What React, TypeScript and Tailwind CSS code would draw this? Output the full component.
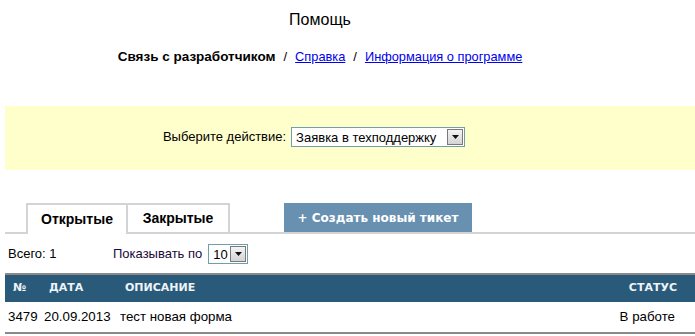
import React from 'react';

function SelectBox({ value, width }: { value: string; width: string }) {
  return (
    <div className={`flex items-center h-[20px] ${width} border border-[#6f9fac] bg-white pl-[4px] pr-[1px]`}>
      <span className="flex-1 text-[13px] leading-none text-black">{value}</span>
      <div className="flex items-center justify-center w-[16px] h-[16px] border border-[#7a7a7a] bg-gradient-to-b from-[#f4f4f4] to-[#d4d4d4]">
        <svg width="7" height="4" viewBox="0 0 7 4">
          <path d="M0 0h7L3.5 4z" fill="#111" />
        </svg>
      </div>
    </div>
  );
}

export default function App() {
  return (
    <div className="w-[695px] h-[336px] bg-white overflow-hidden font-['Liberation_Sans',Arial,sans-serif] text-[13px] text-black">
      <div className="w-[640px] text-center pt-[11px]">
        <h1 className="text-[16px] leading-[18px]">Помощь</h1>
        <nav className="mt-[20px] leading-[15px]">
          <b className="text-[13.5px]">Связь с разработчиком</b>
          <span className="mx-[8px]">/</span>
          <a href="#" className="text-[#0000ee] underline text-[12.8px]">Справка</a>
          <span className="mx-[8px]">/</span>
          <a href="#" className="text-[#0000ee] underline text-[12.8px]">Информация о программе</a>
        </nav>
      </div>

      <div className="ml-[5px] mt-[42px] h-[64px] bg-[#ffffcc] flex justify-center pt-[21px]">
        <div className="flex items-start gap-[5px] ml-[-72px]">
          <span className="leading-[20px]">Выберите действие:</span>
          <SelectBox value="Заявка в техподдержку" width="w-[174px]" />
        </div>
      </div>

      <div className="ml-[5px] mt-[33px] flex items-end border-b-2 border-[#d4d4d4] h-[31px]">
        <div className="ml-[21px] w-[102px] h-[31px] -mb-[2px] border-2 border-b-0 border-[#d4d4d4] bg-white flex items-center justify-center font-bold text-[14px]">
          Открытые
        </div>
        <div className="w-[102px] h-[29px] border-2 border-l-0 border-b-0 border-[#d4d4d4] flex items-center justify-center font-bold text-[14px]">
          Закрытые
        </div>
        <button className="ml-[54px] h-[29px] w-[188px] bg-[#6890b0] text-white font-bold font-['DejaVu_Sans',Verdana,sans-serif] text-[12px] self-start">
          + Создать новый тикет
        </button>
      </div>

      <div className="flex items-center mt-[10px] h-[20px]">
        <span className="ml-[8px] w-[105px]">Всего: 1</span>
        <span className="mr-[6px] text-[#1a0a3a]">Показывать по</span>
        <SelectBox value="10" width="w-[40px]" />
      </div>

      <table className="ml-[5px] mt-[9px] w-[690px] border-collapse table-fixed">
        <colgroup>
          <col className="w-[39px]" />
          <col className="w-[76px]" />
          <col />
          <col className="w-[120px]" />
        </colgroup>
        <thead>
          <tr className="bg-[#295a7a] text-[#eef3f7] font-['DejaVu_Sans',Verdana,sans-serif] text-[11px] font-bold border-t-2 border-[#8a8a8a] h-[28px]">
            <th className="text-left pl-[8px]">№</th>
            <th className="text-left pl-[5px]">ДАТА</th>
            <th className="text-left pl-[5px]">ОПИСАНИЕ</th>
            <th className="text-right pr-[18px]">СТАТУС</th>
          </tr>
        </thead>
        <tbody>
          <tr className="h-[31px] border-b-2 border-[#8a8a8a] text-[13.3px]">
            <td className="pl-[3px]">3479</td>
            <td>20.09.2013</td>
            <td>тест новая форма</td>
            <td className="text-right pr-[20px]">В работе</td>
          </tr>
        </tbody>
      </table>
    </div>
  );
}
